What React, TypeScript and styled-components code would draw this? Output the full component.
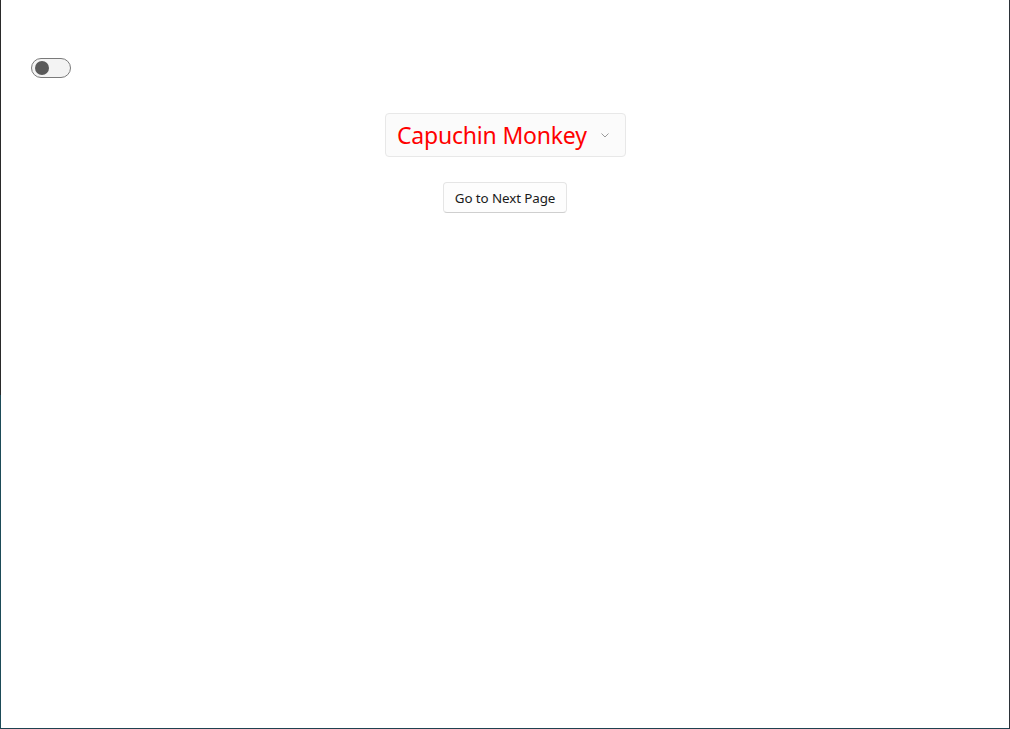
import React, { useState } from "react";
import styled, { createGlobalStyle } from "styled-components";

const Global = createGlobalStyle`
  html, body { margin: 0; padding: 0; background: #ffffff; }
  #root { height: 729px; }
  * { box-sizing: border-box; }
`;

const Window = styled.div`
  width: 1010px;
  height: 729px;
  background: #ffffff;
  border-left: 1px solid #1d4b58;
  border-right: 1px solid #2b3138;
  border-bottom: 1px solid #1f4250;
  display: flex;
  flex-direction: column;
  font-family: "Noto Sans", "Open Sans", sans-serif;
  position: relative;
`;

const LeftTop = styled.div`
  position: absolute;
  left: -1px;
  top: 0;
  width: 1px;
  height: 395px;
  background: #2a2a2a;
`;

const TopRow = styled.div`
  padding: 58px 0 0 30px;
  display: flex;
`;

const Toggle = styled.button<{ $on: boolean }>`
  width: 40px;
  height: 20px;
  border-radius: 10px;
  border: 1px solid #7a7a7a;
  background: #f3f3f3;
  padding: 0 0 0 3px;
  display: flex;
  align-items: center;
  cursor: pointer;
`;

const Knob = styled.span`
  width: 14px;
  height: 14px;
  border-radius: 50%;
  background: #595959;
  display: block;
`;

const Center = styled.div`
  display: flex;
  flex-direction: column;
  align-items: center;
  padding-top: 35px;
  gap: 25px;
`;

const Combo = styled.div`
  width: 241px;
  height: 44px;
  border: 1px solid #e8e8e8;
  border-radius: 4px;
  background: #fbfbfb;
  display: flex;
  align-items: center;
  padding: 0 0 0 11px;
  margin-left: 1px;
`;

const ComboText = styled.span`
  color: #ff0000;
  font-size: 23px;
  letter-spacing: -0.2px;
  flex: 1;
  white-space: nowrap;
`;

const Chevron = styled.svg`
  width: 10px;
  height: 10px;
  margin-right: 15px;
  margin-top: 0px;
`;

const Button = styled.button`
  height: 31px;
  padding: 0 11px;
  border: 1px solid #e5e5e5;
  border-bottom-color: #cfcfcf;
  border-radius: 4px;
  background: #fdfdfd;
  color: #1a1a1a;
  font-family: "Noto Sans", "Open Sans", sans-serif;
  font-size: 13.4px;
  letter-spacing: -0.1px;
  cursor: pointer;
`;

export default function App() {
  const [on, setOn] = useState(false);
  return (
    <>
      <Global />
      <Window>
        <LeftTop />
        <TopRow>
          <Toggle $on={on} onClick={() => setOn(!on)} aria-label="toggle">
            <Knob />
          </Toggle>
        </TopRow>
        <Center>
          <Combo>
            <ComboText>Capuchin Monkey</ComboText>
            <Chevron viewBox="0 0 10 10">
              <path d="M1.5 3.5 L5 7 L8.5 3.5" fill="none" stroke="#9a9a9a" strokeWidth="1" />
            </Chevron>
          </Combo>
          <Button>Go to Next Page</Button>
        </Center>
      </Window>
    </>
  );
}
